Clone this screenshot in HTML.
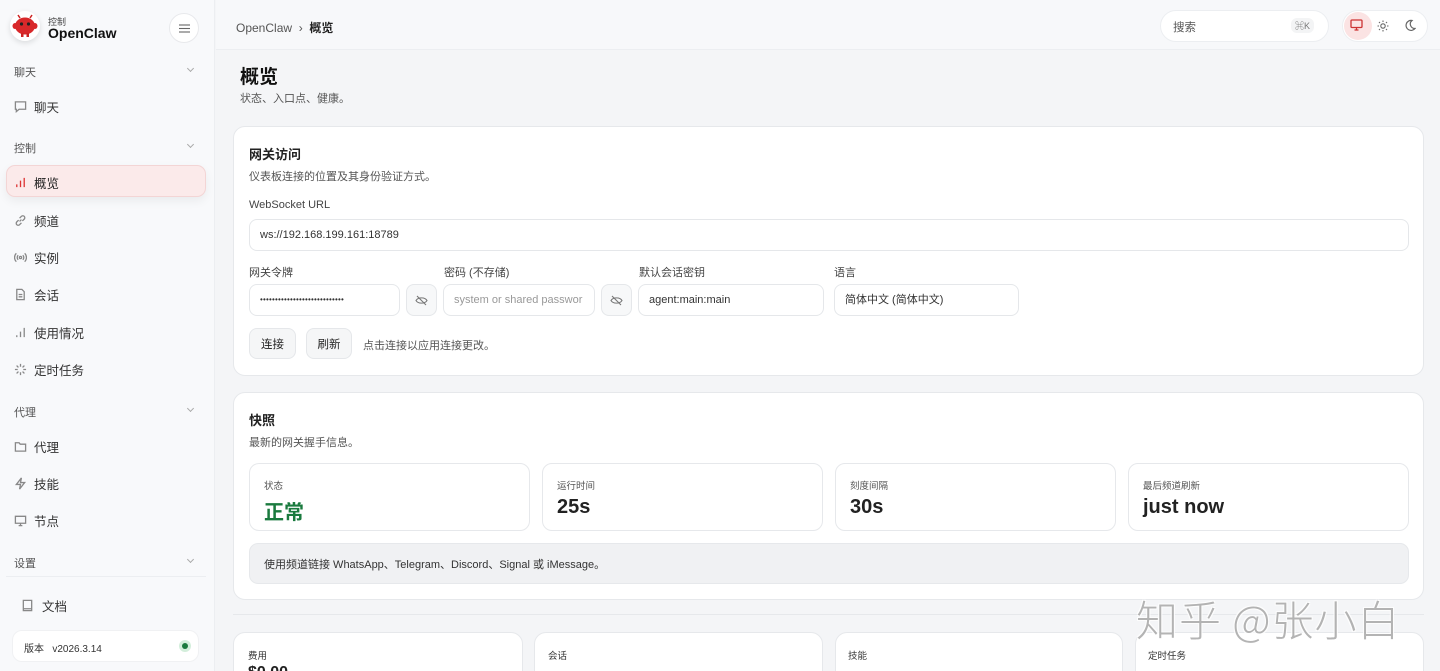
<!DOCTYPE html>
<html style="width:1440px;height:671px;overflow:hidden"><head><meta charset="utf-8"><style>
*{box-sizing:border-box;margin:0;padding:0}
body{width:1440px;height:671px;overflow:hidden;font-family:"Liberation Sans","Noto Sans CJK SC",sans-serif;background:#f4f5f7;color:#222;position:relative}
.side{position:absolute;left:0;top:0;width:215px;height:671px;background:#f8f9fb;border-right:1px solid #eceef1}
.abs{position:absolute}
.sec{position:absolute;left:14px;font-size:11px;color:#555}
.chev{position:absolute;left:188px;width:5px;height:5px;border-right:1px solid #aaa;border-bottom:1px solid #aaa;transform:rotate(45deg)}
.it{position:absolute;left:14px;font-size:12.5px;color:#333;display:flex;align-items:center;gap:7px}
.it svg{width:13px;height:13px;stroke:#888;fill:none;stroke-width:1.4}
.card{position:absolute;background:#fff;border:1px solid #e6e8eb;border-radius:12px}
.lbl{position:absolute;font-size:11px;color:#444}
.inp{position:absolute;height:32px;border:1px solid #e5e7ea;border-radius:8px;background:#fff;font-size:11px;color:#333;padding-left:10px;line-height:30px;white-space:nowrap;overflow:hidden}
.eye{position:absolute;width:31px;height:32px;border:1px solid #e5e7ea;border-radius:8px;background:#f7f8f9;display:flex;align-items:center;justify-content:center}
.btn{position:absolute;height:31px;border:1px solid #e5e7ea;border-radius:8px;background:#f5f6f7;font-size:11.5px;display:flex;align-items:center;justify-content:center}
.stat{position:absolute;top:463px;width:281px;height:68px;border:1px solid #e6e8eb;border-radius:10px;background:#fff}
.stat .t{position:absolute;left:14px;top:14px;font-size:9.5px;color:#555}
.stat .v{position:absolute;left:14px;top:32px;font-size:20px;font-weight:bold;color:#222}
</style></head><body>
<div class="side">
  <div class="abs" style="left:10px;top:11px;width:30px;height:30px;border-radius:50%;background:#fff;box-shadow:0 2px 6px rgba(0,0,0,.12)"></div>
  <svg class="abs" style="left:12px;top:13px" width="26" height="26" viewBox="0 0 26 26"><line x1="8" y1="5" x2="6" y2="2" stroke="#c22" stroke-width="1.5"/><line x1="18" y1="5" x2="20" y2="2" stroke="#c22" stroke-width="1.5"/><ellipse cx="13" cy="13" rx="10" ry="8.5" fill="#d8282a"/><ellipse cx="3" cy="13" rx="2.5" ry="3" fill="#d8282a"/><ellipse cx="23" cy="13" rx="2.5" ry="3" fill="#d8282a"/><circle cx="9.5" cy="11" r="1.6" fill="#222"/><circle cx="16.5" cy="11" r="1.6" fill="#222"/><rect x="9" y="20" width="2.5" height="4" fill="#c22"/><rect x="14.5" y="20" width="2.5" height="4" fill="#c22"/></svg>
  <div class="abs" style="left:48px;top:15px;font-size:9px;color:#444">控制</div>
  <div class="abs" style="left:48px;top:25px;font-size:14px;font-weight:bold;color:#111">OpenClaw</div>
  <div class="abs" style="left:169px;top:13px;width:30px;height:30px;border-radius:50%;background:#fff;border:1px solid #e8e9ec;display:flex;align-items:center;justify-content:center"><svg width="11" height="9" viewBox="0 0 11 9" stroke="#666" stroke-width="1.1"><line x1="0" y1="1" x2="11" y2="1"/><line x1="0" y1="4.5" x2="11" y2="4.5"/><line x1="0" y1="8" x2="11" y2="8"/></svg></div>

  <div class="sec" style="top:64px">聊天</div><div class="chev" style="top:66px"></div>
  <div class="it" style="top:97px"><svg viewBox="0 0 14 14"><path d="M1.5 2h11v8h-7l-3 2.5V10h-1z"/></svg>聊天</div>
  <div class="sec" style="top:140px">控制</div><div class="chev" style="top:142px"></div>
  <div class="abs" style="left:6px;top:165px;width:200px;height:32px;border-radius:9px;background:#fbeaea;border:1px solid #f3d5d5;box-shadow:0 4px 10px rgba(0,0,0,.06)"></div>
  <div class="it" style="top:173px;color:#222"><svg viewBox="0 0 14 14" style="stroke:#d33"><path d="M3 12V9M7 12V5M11 12V2"/></svg>概览</div>
  <div class="it" style="top:211px"><svg viewBox="0 0 14 14"><path d="M6 8l2-2M5 6.5L3 8.5a2 2 0 003 3L8 9.5M9 7.5L11 5.5a2 2 0 00-3-3L6 4.5"/></svg>频道</div>
  <div class="it" style="top:248px"><svg viewBox="0 0 14 14"><circle cx="7" cy="7" r="1.2"/><path d="M4.5 4.5a3.5 3.5 0 000 5M9.5 4.5a3.5 3.5 0 010 5M2.5 2.5a6.3 6.3 0 000 9M11.5 2.5a6.3 6.3 0 010 9"/></svg>实例</div>
  <div class="it" style="top:285px"><svg viewBox="0 0 14 14"><path d="M3 1.5h5.5l2.5 2.5v8.5H3zM5 7h4M5 9.5h4"/></svg>会话</div>
  <div class="it" style="top:323px"><svg viewBox="0 0 14 14"><path d="M3 12V10M7 12V6M11 12V2"/></svg>使用情况</div>
  <div class="it" style="top:360px"><svg viewBox="0 0 14 14"><path d="M7 1v3M7 10v3M1 7h3M10 7h3M2.8 2.8l2 2M9.2 9.2l2 2M2.8 11.2l2-2M9.2 4.8l2-2"/></svg>定时任务</div>
  <div class="sec" style="top:404px">代理</div><div class="chev" style="top:406px"></div>
  <div class="it" style="top:437px"><svg viewBox="0 0 14 14"><path d="M1.5 3h4l1.2 1.5h5.8v7.5h-11z"/></svg>代理</div>
  <div class="it" style="top:474px"><svg viewBox="0 0 14 14"><path d="M8 1L2.5 8H7l-1 5 5.5-7H7z"/></svg>技能</div>
  <div class="it" style="top:511px"><svg viewBox="0 0 14 14"><path d="M1.5 2.5h11v7.5h-11zM5 12.5h4M7 10v2.5"/></svg>节点</div>
  <div class="sec" style="top:555px">设置</div><div class="chev" style="top:557px"></div>
  <div class="abs" style="left:6px;top:576px;width:200px;height:1px;background:#eceef1"></div>
  <div class="it" style="top:596px;left:21px;gap:8px"><svg viewBox="0 0 14 14"><path d="M2.5 1.5h9v11h-9zM2.5 10.5h9"/></svg>文档</div>
  <div class="abs" style="left:12px;top:630px;width:187px;height:32px;border-radius:10px;background:#fff;border:1px solid #f0f1f3;font-size:10px;color:#333;padding:9px 0 0 11px">版本&nbsp;&nbsp;&nbsp;v2026.3.14</div>
  <div class="abs" style="left:179px;top:640px;width:12px;height:12px;border-radius:50%;background:#d3eedb"></div>
  <div class="abs" style="left:182px;top:643px;width:6px;height:6px;border-radius:50%;background:#1a7a3e"></div>
</div>

<div class="abs" style="left:216px;top:0;width:1224px;height:50px;background:#f7f8fa;border-bottom:1px solid #eceef1"></div>
<div class="abs" style="left:236px;top:19px;font-size:12px;color:#555">OpenClaw&nbsp;&nbsp;›&nbsp;&nbsp;<b style="color:#222">概览</b></div>
<div class="abs" style="left:1160px;top:10px;width:169px;height:32px;border-radius:16px;background:#fff;border:1px solid #eceef1;font-size:11.5px;color:#555;padding:8px 0 0 12px">搜索</div>
<div class="abs" style="left:1291px;top:18px;font-size:9px;color:#777;background:#f3f4f5;border-radius:6px;padding:1px 4px">⌘K</div>
<div class="abs" style="left:1342px;top:10px;width:86px;height:32px;border-radius:16px;background:#fff;border:1px solid #eceef1"></div>
<div class="abs" style="left:1344px;top:12px;width:28px;height:28px;border-radius:50%;background:#fbe3e3"></div>
<svg class="abs" style="left:1350px;top:19px" width="13" height="12" viewBox="0 0 13 12" fill="none" stroke="#c33" stroke-width="1.3"><rect x="1" y="1" width="11" height="7.5" rx="1"/><path d="M4.5 11h4M6.5 8.5V11"/></svg>
<svg class="abs" style="left:1377px;top:20px" width="12" height="12" viewBox="0 0 12 12" fill="none" stroke="#666" stroke-width="1.1"><circle cx="6" cy="6" r="2.2"/><path d="M6 0.5v1.5M6 10v1.5M0.5 6H2M10 6h1.5M2 2l1 1M9 9l1 1M2 10l1-1M9 3l1-1"/></svg>
<svg class="abs" style="left:1404px;top:19px" width="12" height="13" viewBox="0 0 12 13" fill="none" stroke="#666" stroke-width="1.2"><path d="M8 1.5a5 5 0 103 8 4.5 4.5 0 01-3-8z"/></svg>

<div class="abs" style="left:240px;top:62px;font-size:19px;font-weight:bold;color:#111">概览</div>
<div class="abs" style="left:240px;top:90px;font-size:11px;color:#555">状态、入口点、健康。</div>

<div class="card" style="left:233px;top:126px;width:1191px;height:250px"></div>
<div class="abs" style="left:249px;top:144px;font-size:13px;font-weight:bold">网关访问</div>
<div class="abs" style="left:249px;top:168px;font-size:11px;color:#555">仪表板连接的位置及其身份验证方式。</div>
<div class="lbl" style="left:249px;top:199px">WebSocket URL</div>
<div class="inp" style="left:249px;top:219px;width:1160px">ws://192.168.199.161:18789</div>
<div class="lbl" style="left:249px;top:264px">网关令牌</div>
<div class="lbl" style="left:444px;top:264px">密码 (不存储)</div>
<div class="lbl" style="left:639px;top:264px">默认会话密钥</div>
<div class="lbl" style="left:834px;top:264px">语言</div>
<div class="inp" style="left:249px;top:284px;width:151px;font-size:8px;letter-spacing:0.2px">••••••••••••••••••••••••••••</div>
<div class="eye" style="left:406px;top:284px"><svg width="13" height="11" viewBox="0 0 13 11" fill="none" stroke="#777" stroke-width="1.1"><path d="M1 5.5C3 2 10 2 12 5.5 10 9 3 9 1 5.5zM2 1l9 9"/></svg></div>
<div class="inp" style="left:443px;top:284px;width:152px;color:#999">system or shared passwor</div>
<div class="eye" style="left:601px;top:284px"><svg width="13" height="11" viewBox="0 0 13 11" fill="none" stroke="#777" stroke-width="1.1"><path d="M1 5.5C3 2 10 2 12 5.5 10 9 3 9 1 5.5zM2 1l9 9"/></svg></div>
<div class="inp" style="left:638px;top:284px;width:186px">agent:main:main</div>
<div class="inp" style="left:834px;top:284px;width:185px">简体中文 (简体中文)</div>
<div class="btn" style="left:249px;top:328px;width:47px">连接</div>
<div class="btn" style="left:306px;top:328px;width:46px">刷新</div>
<div class="abs" style="left:363px;top:337px;font-size:11px;color:#555">点击连接以应用连接更改。</div>

<div class="card" style="left:233px;top:392px;width:1191px;height:208px"></div>
<div class="abs" style="left:249px;top:410px;font-size:13px;font-weight:bold">快照</div>
<div class="abs" style="left:249px;top:434px;font-size:11px;color:#555">最新的网关握手信息。</div>
<div class="stat" style="left:249px"><div class="t">状态</div><div class="v" style="color:#1a7a3e">正常</div></div>
<div class="stat" style="left:542px"><div class="t">运行时间</div><div class="v">25s</div></div>
<div class="stat" style="left:835px"><div class="t">刻度间隔</div><div class="v">30s</div></div>
<div class="stat" style="left:1128px"><div class="t">最后频道刷新</div><div class="v">just now</div></div>
<div class="abs" style="left:249px;top:543px;width:1160px;height:41px;border-radius:9px;background:#f0f1f3;border:1px solid #e6e8eb;font-size:11px;color:#333;padding:12px 0 0 14px">使用频道链接 WhatsApp、Telegram、Discord、Signal 或 iMessage。</div>

<div class="abs" style="left:233px;top:614px;width:1191px;height:1px;background:#e6e8eb"></div>
<div class="card" style="left:233px;top:632px;width:290px;height:60px"></div>
<div class="card" style="left:534px;top:632px;width:289px;height:60px"></div>
<div class="card" style="left:835px;top:632px;width:288px;height:60px"></div>
<div class="card" style="left:1135px;top:632px;width:289px;height:60px"></div>
<div class="abs" style="left:248px;top:648px;font-size:9.5px;color:#333">费用</div>
<div class="abs" style="left:548px;top:648px;font-size:9.5px;color:#333">会话</div>
<div class="abs" style="left:848px;top:648px;font-size:9.5px;color:#333">技能</div>
<div class="abs" style="left:1148px;top:648px;font-size:9.5px;color:#333">定时任务</div>
<div class="abs" style="left:248px;top:664px;font-size:16px;font-weight:bold;color:#222">$0.00</div>

<div class="abs" style="left:1136px;top:588px;font-size:42px;color:#a8a8a8;text-shadow:1px 1px 0 #fff,-1px -1px 0 #fff,1px -1px 0 #fff,-1px 1px 0 #fff;letter-spacing:1px;white-space:nowrap;font-family:'Noto Sans CJK SC',sans-serif;font-weight:300;opacity:.85">知乎 @张小白</div>
</body></html>
